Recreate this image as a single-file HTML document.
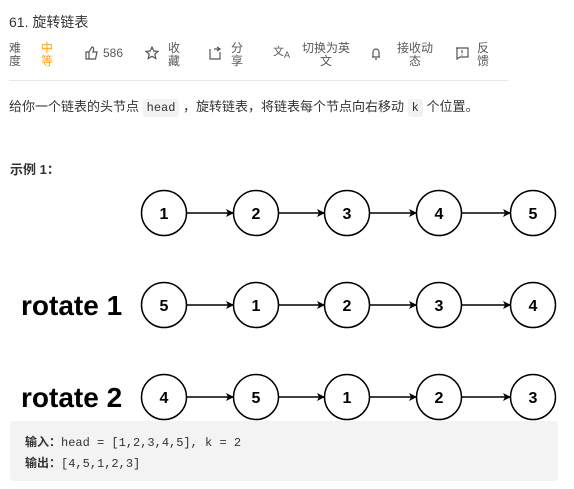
<!DOCTYPE html>
<html><head><meta charset="utf-8"><style>
body{margin:0;background:#fff;width:574px;height:489px;overflow:hidden;font-family:"Liberation Sans","Noto Sans CJK SC",sans-serif;color:#262626;position:relative}
.a{position:absolute}
.t{font-size:13px;color:#333}
.s{font-size:12px;color:#595959;line-height:13px}
code{font-family:"Liberation Mono",monospace;background:#f2f2f2;font-size:12px;padding:2px 4px;border-radius:3px}
</style></head><body>
<div class="a t" style="left:9px;top:12px;font-size:14px">61. 旋转链表</div>
<div class="a s" style="left:9px;top:42px">难<br>度</div>
<div class="a s" style="left:41px;top:42px;color:#ffa116">中<br>等</div>
<svg class="a" style="left:85px;top:46px" width="14" height="14" viewBox="0 0 14 14" fill="none" stroke="#555" stroke-width="1.2"><path d="M1 6h3v7H1zM4 6l3-5c1 0 2 1 1.5 3L8 6h4l-1.5 7H4"/></svg>
<div class="a s" style="left:103px;top:47px">586</div>
<svg class="a" style="left:145px;top:46px" width="14" height="14" viewBox="0 0 14 14" fill="none" stroke="#555" stroke-width="1.2"><path d="M7 1l1.8 4 4.2.4-3.2 2.8 1 4.2L7 10.3 3.2 12.4l1-4.2L1 5.4l4.2-.4z"/></svg>
<div class="a s" style="left:168px;top:42px">收<br>藏</div>
<svg class="a" style="left:208px;top:46px" width="14" height="14" viewBox="0 0 14 14" fill="none" stroke="#555" stroke-width="1.2"><path d="M2 3v10h10V6M6 3h6M9 1l3 2-3 2"/></svg>
<div class="a s" style="left:231px;top:42px">分<br>享</div>
<div class="a s" style="left:273px;top:46px;font-size:11px">文<sub>A</sub></div>
<div class="a s" style="left:296px;top:42px;width:60px;text-align:center">切换为英<br>文</div>
<svg class="a" style="left:369px;top:46px" width="14" height="14" viewBox="0 0 14 14" fill="none" stroke="#555" stroke-width="1.2"><path d="M4 11V6a3 3 0 016 0v5zM3 11h8M6 13h2"/></svg>
<div class="a s" style="left:390px;top:42px;width:50px;text-align:center">接收动<br>态</div>
<svg class="a" style="left:455px;top:46px" width="14" height="14" viewBox="0 0 14 14" fill="none" stroke="#555" stroke-width="1.2"><path d="M1 2h12v9H5l-3 2V2zM7 4v3M7 8.5v1"/></svg>
<div class="a s" style="left:477px;top:42px">反<br>馈</div>
<div class="a" style="left:9px;top:80px;width:499px;height:1px;background:#e8e8e8"></div>
<div class="a t" style="left:9px;top:96px">给你一个链表的头节点 <code>head</code> ，旋转链表，将链表每个节点向右移动 <code>k</code> 个位置。</div>
<div class="a t" style="left:10px;top:159px;font-weight:bold">示例 1：</div>
<svg class="a" style="left:0;top:180px" width="574" height="245" viewBox="0 180 574 245">
<defs><marker id="m" markerWidth="8" markerHeight="8" refX="7" refY="4" orient="auto" markerUnits="userSpaceOnUse"><path d="M0 0L8 4 0 8 2 4z" fill="#000"/></marker></defs>
<g font-family="Liberation Sans,sans-serif" font-weight="bold" font-size="16" text-anchor="middle" fill="#000">
<g id="r1">
</g>
</g>
<g stroke="#000" stroke-width="1.5" fill="none">
<circle cx="164" cy="213" r="22.5"/><circle cx="256" cy="213" r="22.5"/><circle cx="347" cy="213" r="22.5"/><circle cx="439" cy="213" r="22.5"/><circle cx="533" cy="213" r="22.5"/>
<circle cx="164" cy="305" r="22.5"/><circle cx="256" cy="305" r="22.5"/><circle cx="347" cy="305" r="22.5"/><circle cx="439" cy="305" r="22.5"/><circle cx="533" cy="305" r="22.5"/>
<circle cx="164" cy="397" r="22.5"/><circle cx="256" cy="397" r="22.5"/><circle cx="347" cy="397" r="22.5"/><circle cx="439" cy="397" r="22.5"/><circle cx="533" cy="397" r="22.5"/>
<path marker-end="url(#m)" d="M187 213H233"/><path marker-end="url(#m)" d="M279 213H324"/><path marker-end="url(#m)" d="M370 213H416"/><path marker-end="url(#m)" d="M462 213H510"/>
<path marker-end="url(#m)" d="M187 305H233"/><path marker-end="url(#m)" d="M279 305H324"/><path marker-end="url(#m)" d="M370 305H416"/><path marker-end="url(#m)" d="M462 305H510"/>
<path marker-end="url(#m)" d="M187 397H233"/><path marker-end="url(#m)" d="M279 397H324"/><path marker-end="url(#m)" d="M370 397H416"/><path marker-end="url(#m)" d="M462 397H510"/>
</g>
<g font-family="Liberation Sans,sans-serif" font-weight="bold" font-size="16" text-anchor="middle" fill="#000">
<text x="164" y="219">1</text><text x="256" y="219">2</text><text x="347" y="219">3</text><text x="439" y="219">4</text><text x="533" y="219">5</text>
<text x="164" y="311">5</text><text x="256" y="311">1</text><text x="347" y="311">2</text><text x="439" y="311">3</text><text x="533" y="311">4</text>
<text x="164" y="403">4</text><text x="256" y="403">5</text><text x="347" y="403">1</text><text x="439" y="403">2</text><text x="533" y="403">3</text>
</g>
<g font-family="Liberation Sans,sans-serif" font-weight="bold" font-size="28" fill="#000">
<text x="21" y="315">rotate 1</text><text x="21" y="407">rotate 2</text>
</g>
</svg>
<div class="a" style="left:10px;top:421px;width:548px;height:60px;background:#f3f3f3;border-radius:3px"></div>
<div class="a" style="left:25px;top:432px;font-size:12px;line-height:20px;font-family:'Liberation Mono','Noto Sans CJK SC',monospace;color:#333">
<b style="font-family:'Liberation Sans','Noto Sans CJK SC',sans-serif">输入：</b>head = [1,2,3,4,5], k = 2<br>
<b style="font-family:'Liberation Sans','Noto Sans CJK SC',sans-serif">输出：</b>[4,5,1,2,3]</div>
</body></html>
